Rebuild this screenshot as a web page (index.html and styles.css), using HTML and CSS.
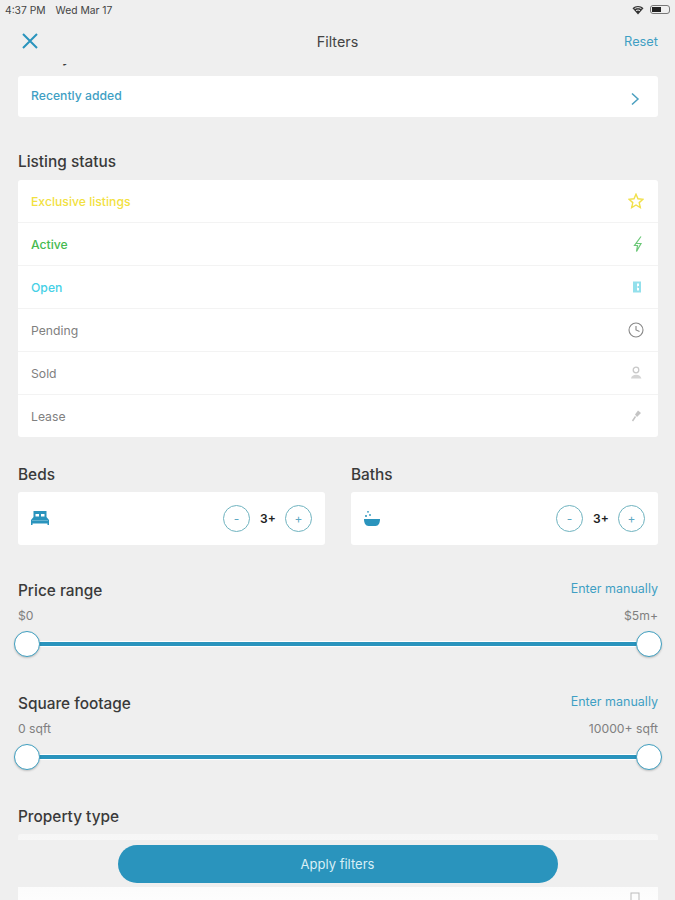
FILE: index.html
```html
<!DOCTYPE html>
<html lang="en">
<head>
  <meta charset="UTF-8" />
  <meta name="viewport" content="width=device-width, initial-scale=1.0" />
  <title>Filters</title>
  <link rel="stylesheet" href="styles.css">
</head>
<body>
  <div class="screen">
    <div class="status-bar">
      <div class="status-time"><span>4:37 PM</span><span>Wed Mar 17</span></div>
      <div class="status-icons">
        <svg width="12" height="10" viewBox="0 0 12 10"><path d="M6 9.5 0.5 3.2C3.6 0.4 8.4 0.4 11.5 3.2Z" fill="#333"/><path d="M2.6 3.6C4.6 2.3 7.4 2.3 9.4 3.6" stroke="#efefef" fill="none"/><path d="M4 5.6C5.2 4.9 6.8 4.9 8 5.6" stroke="#efefef" fill="none"/></svg>
        <div class="battery"><div class="battery-level"></div></div>
      </div>
    </div>

    <div class="nav">
      <svg class="nav-close" width="18" height="18" viewBox="0 0 18 18"><path d="M2 2 16 16M16 2 2 16" stroke="#2a94bd" stroke-width="2" fill="none"/></svg>
      <div class="nav-title">Filters</div>
      <div class="nav-reset">Reset</div>
    </div>

    <div class="content">
      <div class="section-title clipped">Sort by</div>
      <div class="card">
        <div class="row row-sort">
          <span class="blue strong">Recently added</span>
          <svg class="chevron" width="10" height="14" viewBox="0 0 10 14"><path d="M2 1.5 8 7 2 12.5" stroke="#4a9fbf" stroke-width="1.5" fill="none"/></svg>
        </div>
      </div>

      <div class="section-title">Listing status</div>
      <div class="card">
        <div class="row">
          <span class="yellow strong">Exclusive listings</span>
          <svg width="16" height="16" viewBox="0 0 16 16"><path d="M8 1.2 10 5.8 15 6.3 11.2 9.6 12.3 14.6 8 12 3.7 14.6 4.8 9.6 1 6.3 6 5.8Z" stroke="#f1e04a" stroke-width="1.4" fill="none"/></svg>
        </div>
        <div class="row">
          <span class="green strong">Active</span>
          <svg width="16" height="18" viewBox="0 0 16 18"><path d="M13 1.5 8 8.5H13L8.5 16.5 9.5 10.5H6.5Z" stroke="#6cc878" stroke-width="1.2" fill="none"/></svg>
        </div>
        <div class="row">
          <span class="cyan strong">Open</span>
          <svg width="16" height="12" viewBox="0 0 16 12"><rect x="5" y="0.5" width="8" height="11" fill="#93e0ec"/><path d="M9 2.5H11V5H9.5V7H11V9.5H9Z" fill="#fff"/></svg>
        </div>
        <div class="row">
          <span class="gray">Pending</span>
          <svg width="16" height="16" viewBox="0 0 16 16"><circle cx="8" cy="8" r="7" stroke="#888" stroke-width="1.1" fill="none"/><path d="M8 4V8L11.5 9.5" stroke="#888" stroke-width="1.1" fill="none"/></svg>
        </div>
        <div class="row">
          <span class="gray">Sold</span>
          <svg width="16" height="14" viewBox="0 0 16 14"><circle cx="8" cy="4" r="2.8" fill="none" stroke="#c8c8c8" stroke-width="1.3"/><path d="M3 12.5C3.5 8.5 9 8 12 10L13.5 12.5Z" fill="#d4d4d4"/></svg>
        </div>
        <div class="row">
          <span class="gray">Lease</span>
          <svg width="16" height="14" viewBox="0 0 16 14"><path d="M10 1.5 13 4 9 8 7 5.5Z" fill="#c4c4c4"/><path d="M7.5 7.5 4.5 12" stroke="#c4c4c4" stroke-width="1.5" fill="none"/></svg>
        </div>
      </div>

      <div class="counters">
        <div class="counter-col">
          <div class="section-title">Beds</div>
          <div class="card counter">
            <svg width="20" height="17" viewBox="0 0 20 17"><path d="M3.5 1H16.5V7L19 10V15H17.5V13.5H2.5V15H1V10L3.5 7Z" fill="#2a94bd"/><path d="M5.5 4H9V6.5H5.5ZM11 4H14.5V6.500H11Z" fill="#fff"/><path d="M2 10.5H18" stroke="#7fc0d8" stroke-width="0.7"/></svg>
            <div class="stepper">
              <div class="step-btn">-</div>
              <span class="step-value">3+</span>
              <div class="step-btn">+</div>
            </div>
          </div>
        </div>
        <div class="counter-col">
          <div class="section-title">Baths</div>
          <div class="card counter">
            <svg width="18" height="17" viewBox="0 0 18 17"><path d="M1 9H17C17 13 15.5 16 12.5 16H5.5C2.5 16 1 13 1 9Z" fill="#2a94bd"/><circle cx="5" cy="1.8" r="0.9" fill="#2a94bd"/><circle cx="3" cy="6" r="1" fill="#2a94bd"/><circle cx="7" cy="5" r="0.9" fill="#2a94bd"/></svg>
            <div class="stepper">
              <div class="step-btn">-</div>
              <span class="step-value">3+</span>
              <div class="step-btn">+</div>
            </div>
          </div>
        </div>
      </div>

      <div class="range-block">
        <div class="range-head">
          <div class="section-title">Price range</div>
          <div class="blue manual">Enter manually</div>
        </div>
        <div class="range-labels"><span>$0</span><span>$5m+</span></div>
        <div class="slider"><div class="thumb"></div><div class="track"></div><div class="thumb"></div></div>
      </div>

      <div class="range-block">
        <div class="range-head">
          <div class="section-title">Square footage</div>
          <div class="blue manual">Enter manually</div>
        </div>
        <div class="range-labels"><span>0 sqft</span><span>10000+ sqft</span></div>
        <div class="slider"><div class="thumb"></div><div class="track"></div><div class="thumb"></div></div>
      </div>

      <div class="section-title type-title">Property type</div>
      <div class="card type-card">
        <div class="row"></div>
        <div class="row">
          <span></span>
          <svg width="16" height="16" viewBox="0 0 16 16"><rect x="3" y="3" width="8" height="10" fill="none" stroke="#bbb"/></svg>
        </div>
      </div>
    </div>

    <div class="apply-bar">
      <div class="apply-btn">Apply filters</div>
    </div>
  </div>
</body>
</html>
```

FILE: styles.css
```css
html, body {
  margin: 0;
  padding: 0;
}
body {
  font-family: 'Inter', 'Liberation Sans', sans-serif;
  background: #efefef;
  color: #333;
}
.screen {
  position: relative;
  width: 675px;
  height: 900px;
  overflow: hidden;
  background: #efefef;
}
.status-bar {
  display: flex;
  justify-content: space-between;
  align-items: center;
  box-sizing: border-box;
  height: 18px;
  padding: 1px 5px 0;
  font-size: 10.3px;
  color: #444;
}
.status-time {
  display: flex;
  gap: 10px;
}
.status-icons {
  display: flex;
  align-items: center;
  gap: 6px;
}
.battery {
  width: 20px;
  height: 9px;
  border: 1px solid #777;
  border-radius: 3px;
  box-sizing: border-box;
  padding: 1px;
}
.battery-level {
  width: 9px;
  height: 100%;
  background: #222;
}
.nav {
  display: flex;
  align-items: center;
  justify-content: space-between;
  height: 46px;
  padding: 0 17px 0 21px;
  position: relative;
}
.nav-title {
  position: absolute;
  left: 0;
  right: 0;
  text-align: center;
  font-size: 14.3px;
  color: #444;
}
.nav-reset {
  font-size: 12.8px;
  color: #3f9fc4;
}
.content {
  height: 836px;
  overflow: hidden;
  padding: 0 17px 0 18px;
}
.section-title {
  font-size: 15.4px;
  font-weight: 500;
  line-height: 18px;
  color: #3a3a3a;
  margin-bottom: 9px;
}
.clipped {
  margin-top: -16px;
  margin-bottom: 10px;
}
.card {
  background: #fff;
  border-radius: 3px;
}
.card + .section-title {
  margin-top: 36px;
}
.row {
  display: flex;
  align-items: center;
  justify-content: space-between;
  height: 42px;
  padding: 0 14px 0 13px;
  border-bottom: 1px solid #f3f3f3;
  font-size: 12.2px;
}
.row:last-child {
  border-bottom: none;
}
.row-sort {
  height: 41px;
}
.row-sort span {
  position: relative;
  top: -1px;
}
.chevron {
  margin: 4px 4px 0 0;
}
.strong {
  font-weight: 500;
}
.blue { color: #3f9fc4; }
.yellow { color: #f2e13f; }
.green { color: #45ba50; }
.cyan { color: #45d0e6; }
.gray { color: #808080; }
.counters {
  display: flex;
  gap: 26px;
  margin-top: 29px;
}
.counter-col {
  flex: 1;
}
.counter-col .section-title {
  margin-bottom: 8px;
}
.counter {
  display: flex;
  align-items: center;
  justify-content: space-between;
  height: 53px;
  padding: 0 13px 0 12px;
}
.stepper {
  display: flex;
  align-items: center;
  gap: 10px;
}
.step-btn {
  display: flex;
  align-items: center;
  justify-content: center;
  box-sizing: border-box;
  width: 27px;
  height: 27px;
  border: 1.2px solid #6fb3bf;
  border-radius: 50%;
  font-size: 12px;
  color: #5fa8c4;
}
.step-value {
  width: 15px;
  font-size: 12px;
  font-weight: 600;
  color: #222;
}
.range-block {
  height: 113px;
}
.counters + .range-block {
  margin-top: 37px;
}
.range-head {
  display: flex;
  justify-content: space-between;
  align-items: center;
}
.manual {
  font-size: 12.5px;
  margin-bottom: 9px;
  margin-top: -5px;
}
.range-labels {
  display: flex;
  justify-content: space-between;
  font-size: 12.2px;
  line-height: 14px;
  color: #808080;
}
.slider {
  display: flex;
  align-items: center;
  margin: 8px -4px 0;
}
.track {
  flex: 1;
  height: 4px;
  margin: 0 -1px;
  background: #2a94bd;
  box-shadow: 0 0 0 1px #fff;
}
.thumb {
  position: relative;
  z-index: 1;
  width: 24px;
  height: 24px;
  border: 1px solid #3f9fc0;
  border-radius: 50%;
  background: #fff;
  box-shadow: 0 1px 2px rgba(0, 0, 0, 0.2);
}
.type-title {
  margin-bottom: 8px;
}
.type-card {
  background: linear-gradient(#f6f6f6, #fff);
}
.apply-bar {
  position: absolute;
  left: 0;
  right: 0;
  top: 840px;
  height: 47px;
  background: #efefef;
  display: flex;
  justify-content: center;
  align-items: center;
}
.apply-btn {
  width: 440px;
  height: 38px;
  line-height: 38px;
  border-radius: 19px;
  background: #2a94bd;
  color: #d8eff6;
  text-align: center;
  font-size: 13px;
}
```
